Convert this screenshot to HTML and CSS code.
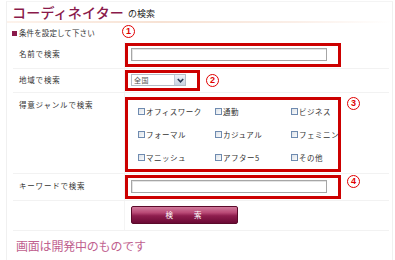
FILE: index.html
```html
<!DOCTYPE html>
<html lang="ja">
<head>
<meta charset="utf-8">
<link rel="stylesheet" href="styles.css">
</head>
<body>
<div class="frame">
  <div class="title-bar">
    <span class="title">コーディネイター</span><span class="sub">の検索</span>
  </div>
  <div class="rule"></div>
  <div class="cond">
    <div class="cond-label"><span class="sq"></span>条件を設定して下さい</div>
    <div class="cond-num"><span class="num">1</span></div>
  </div>
  <div class="form">
    <div class="row">
      <div class="label">名前で検索</div>
      <div class="field pt1">
        <div class="box box-wide"><div class="input"></div></div>
      </div>
    </div>
    <div class="row">
      <div class="label lt">地域で検索</div>
      <div class="field pt1 center">
        <div class="box box-sel">
          <div class="select"><span class="sel-text">全国</span><span class="sel-btn"><svg width="7" height="5" viewBox="0 0 7 5"><path d="M0.8 1 L3.5 3.8 L6.2 1" fill="none" stroke="#2a3a55" stroke-width="1.6"/></svg></span></div>
        </div>
        <span class="num">2</span>
      </div>
    </div>
    <div class="row">
      <div class="label">得意ジャンルで検索</div>
      <div class="field pt4">
        <div class="box box-wide box-genre">
          <div class="genres">
            <label class="cb"><span class="chk"></span>オフィスワーク</label>
            <label class="cb"><span class="chk"></span>通勤</label>
            <label class="cb"><span class="chk"></span>ビジネス</label>
            <label class="cb"><span class="chk"></span>フォーマル</label>
            <label class="cb"><span class="chk"></span>カジュアル</label>
            <label class="cb"><span class="chk"></span>フェミニン</label>
            <label class="cb"><span class="chk"></span>マニッシュ</label>
            <label class="cb"><span class="chk"></span>アフター5</label>
            <label class="cb"><span class="chk"></span>その他</label>
          </div>
        </div>
        <span class="num">3</span>
      </div>
    </div>
    <div class="row">
      <div class="label">キーワードで検索</div>
      <div class="field pt1">
        <div class="box box-wide"><div class="input"></div></div>
        <span class="num">4</span>
      </div>
    </div>
    <div class="row row-btn">
      <div class="label"></div>
      <div class="field btn-cell">
        <div class="button">検　　索</div>
      </div>
    </div>
  </div>
  <div class="note">画面は開発中のものです</div>
</div>
</body>
</html>
```
FILE: styles.css
```css
html, body {
  margin: 0;
  padding: 0;
  background: #fff;
}
body {
  font-family: "Noto Sans CJK JP", "Noto Sans", sans-serif;
  color: #333;
  width: 395px;
  height: 260px;
  overflow: hidden;
}
.frame {
  margin: 1px 2px 0 6px;
  border-left: 1px solid #f0f0f0;
  border-top: 1px solid #f4f4f4;
  border-right: 1px solid #f0f0f0;
  height: 259px;
  box-sizing: border-box;
}
.title-bar {
  height: 19px;
  padding-left: 5px;
  display: flex;
  align-items: flex-end;
  white-space: nowrap;
}
.title {
  font-size: 14px;
  line-height: 17px;
  letter-spacing: 0.2px;
  color: #8a1a4b;
  font-weight: 500;
}
.sub {
  font-size: 9px;
  line-height: 12px;
  color: #222;
  margin-left: 4px;
  margin-bottom: 1px;
}
.rule {
  height: 2px;
  background: linear-gradient(to right, #fdf3ec 0%, #f7e2d4 40%, #fbefe8 75%, #fff 100%);
}
.cond {
  display: grid;
  grid-template-columns: 115px auto;
  height: 19px;
  align-items: center;
}
.cond-label {
  font-size: 7.5px;
  line-height: 10px;
  padding-left: 5px;
  display: flex;
  align-items: center;
  color: #333;
  letter-spacing: 0.1px;
  margin-top: 1px;
}
.sq {
  width: 5px;
  height: 5px;
  background: #8a1a4b;
  margin-right: 2px;
}
.cond-num {
  display: flex;
  margin-top: -2px;
}
.form {
  margin-left: 6px;
  width: 376px;
}
.row {
  display: grid;
  grid-template-columns: 112px auto;
  border-bottom: 1px solid #f2f2f2;
}
.label {
  font-size: 7.5px;
  line-height: 10px;
  letter-spacing: 0.8px;
  padding: 7px 0 0 6px;
  border-right: 1px solid #f4f4f4;
  color: #333;
}
.label.lt {
  padding-top: 6px;
}
.field {
  display: flex;
  align-items: flex-start;
  gap: 6px;
  padding-bottom: 1px;
}
.field.center {
  align-items: center;
}
.pt1 { padding-top: 1px; }
.pt4 { padding-top: 4px; }
.box {
  border: 3px solid #cc0000;
  box-sizing: border-box;
}
.box-wide {
  width: 216px;
  height: 24px;
  padding: 2px 0 0 3px;
}
.box-genre {
  height: 75px;
  padding: 0 0 0 10px;
}
.box-sel {
  width: 75px;
  height: 21px;
  padding: 1px 0 0 3px;
}
.input {
  width: 196px;
  height: 13px;
  box-sizing: border-box;
  border: 1px solid #a6a6a6;
  box-shadow: inset 1px 1px 0 #e4e4e4;
  background: #fff;
}
.select {
  width: 55px;
  height: 12px;
  box-sizing: border-box;
  border: 1px solid #b5bcc6;
  display: flex;
  align-items: stretch;
  background: #fff;
}
.sel-text {
  flex: 1;
  font-size: 7px;
  line-height: 10px;
  color: #555;
  padding-left: 2px;
  letter-spacing: 0.5px;
}
.sel-btn {
  width: 10px;
  background: linear-gradient(#eef2f8, #c9d3e2);
  border-left: 1px solid #c4ccd8;
  display: flex;
  align-items: center;
  justify-content: center;
}
.num {
  display: inline-flex;
  align-items: center;
  justify-content: center;
  width: 13px;
  height: 13px;
  box-sizing: border-box;
  border: 1.6px solid #e00000;
  border-radius: 50%;
  color: #e00000;
  font-family: "Liberation Sans", Arial, sans-serif;
  font-weight: bold;
  font-size: 9px;
  line-height: 9px;
}
.genres {
  display: grid;
  grid-template-columns: 77px 76px 60px;
  grid-auto-rows: 23px;
  align-items: center;
}
.cb {
  display: flex;
  align-items: center;
  font-size: 7.5px;
  line-height: 10px;
  letter-spacing: 0.5px;
  color: #333;
  white-space: nowrap;
}
.chk {
  width: 7px;
  height: 7px;
  box-sizing: border-box;
  border: 1px solid #6f8bb0;
  background: linear-gradient(135deg, #dde2e8, #fafbfc);
  margin-right: 1px;
}
.row-btn .label {
  padding: 0;
}
.btn-cell {
  padding: 5px 0 6px 6px;
}
.button {
  width: 107px;
  height: 18px;
  box-sizing: border-box;
  border: 1px solid #5a0a2a;
  border-radius: 2px;
  background: linear-gradient(#d17a9c 0%, #b94a76 35%, #8e1e4e 55%, #6b0a35 100%);
  color: #fff;
  font-size: 7.5px;
  line-height: 16px;
  text-align: center;
  letter-spacing: 2px;
}
.note {
  font-size: 12px;
  line-height: 16px;
  color: #c0608e;
  padding: 7px 0 0 9px;
  letter-spacing: -0.2px;
}
```
